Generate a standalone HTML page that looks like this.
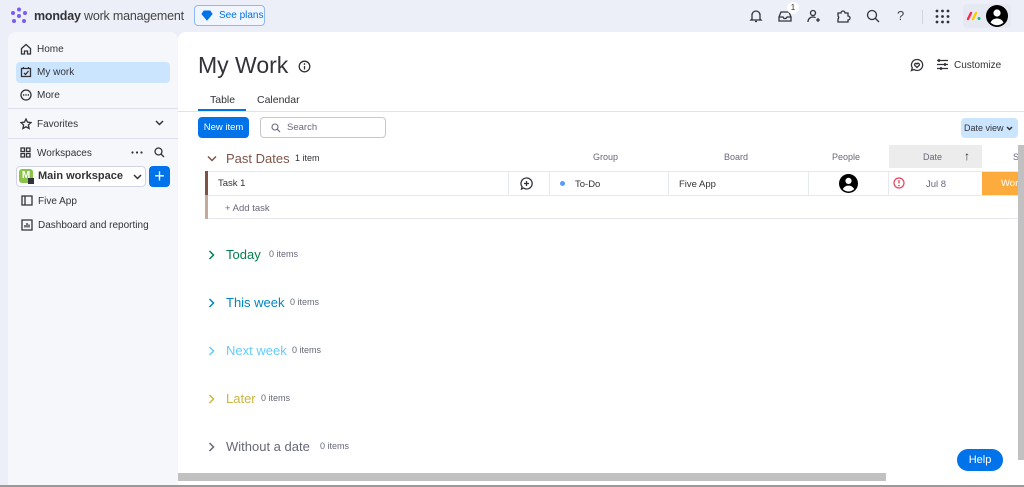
<!DOCTYPE html>
<html><head><meta charset="utf-8"><style>
*{margin:0;padding:0;box-sizing:border-box}
body{width:1024px;height:487px;overflow:hidden;background:#eceff8;font-family:"Liberation Sans",sans-serif;color:#323338;position:relative}
.a{position:absolute;white-space:nowrap}
.side{left:8px;top:32px;width:170px;height:453px;background:#f6f7fb;border-radius:8px 8px 0 0}
.main{left:178px;top:32px;width:846px;height:453px;background:#fff;border-radius:8px 0 0 0}
.si{font-size:10px;color:#323338}
.ico{stroke:#323338;fill:none;stroke-width:1.3}
.hd{font-size:9px;color:#676879}
.grp{font-size:13px}
.cnt{font-size:9px;color:#676879}
.ch{fill:none;stroke-width:1.5}
</style></head><body>
<!-- top bar -->
<svg class="a" style="left:10px;top:7px" width="18" height="18" viewBox="0 0 18 18"><g fill="#7a5cf5"><circle cx="9" cy="2.5" r="2"/><circle cx="3" cy="6" r="2"/><circle cx="15" cy="6" r="2"/><circle cx="9" cy="9" r="2"/><circle cx="4" cy="14" r="2"/><circle cx="14" cy="14" r="2"/></g></svg>
<div class="a" style="left:34px;top:9px;font-size:12.5px;color:#323338;letter-spacing:-0.2px"><b>monday</b> <span style="color:#444">work management</span></div>
<div class="a" style="left:194px;top:5px;width:71px;height:21px;border:1px solid #8fb8f0;border-radius:4px;font-size:10px;color:#0073ea;padding:4px 0 0 24px;background:#f0f5ff">See plans</div>
<svg class="a" style="left:201px;top:10px" width="12" height="11" viewBox="0 0 12 11"><path d="M1 4 3 1h6l2 3-5 6z M1 4h10" fill="#0073ea" stroke="#0073ea"/></svg>
<svg class="a" style="left:748px;top:8px" width="16" height="16" viewBox="0 0 16 16"><path class="ico" d="M4 11V7a4 4 0 018 0v4l1 1H3z M7 13.5h2"/></svg>
<svg class="a" style="left:777px;top:8px" width="16" height="16" viewBox="0 0 16 16"><path class="ico" d="M2 9l2-5h8l2 5v4H2z M2 9h4l1 1.5h2L10 9h4"/></svg>
<div class="a" style="left:787px;top:2px;width:12px;height:12px;border-radius:6px;background:#fff;font-size:8px;text-align:center;line-height:12px">1</div>
<svg class="a" style="left:806px;top:8px" width="16" height="16" viewBox="0 0 16 16"><path class="ico" d="M7 7.5a2.5 2.5 0 100-5 2.5 2.5 0 000 5z M2 14c0-3 2-5 5-5 1 0 2 .3 2.5.8 M12 10v4 M10 12h4"/></svg>
<svg class="a" style="left:835px;top:8px" width="16" height="16" viewBox="0 0 16 16"><path class="ico" d="M3 5h3a2 2 0 014 0h3v3a2 2 0 010 4v2H3v-3a2 2 0 000-3z"/></svg>
<svg class="a" style="left:865px;top:8px" width="16" height="16" viewBox="0 0 16 16"><path class="ico" d="M7 11.5a4.5 4.5 0 100-9 4.5 4.5 0 000 9z M10.5 10.5l3.5 3.5"/></svg>
<div class="a" style="left:897px;top:8px;font-size:13px;color:#444">?</div>
<div class="a" style="left:922px;top:10px;width:1px;height:14px;background:#d0d4e4"></div>
<svg class="a" style="left:935px;top:9px" width="15" height="15" viewBox="0 0 15 15"><g fill="#323338"><circle cx="2" cy="2" r="1.4"/><circle cx="7.5" cy="2" r="1.4"/><circle cx="13" cy="2" r="1.4"/><circle cx="2" cy="7.5" r="1.4"/><circle cx="7.5" cy="7.5" r="1.4"/><circle cx="13" cy="7.5" r="1.4"/><circle cx="2" cy="13" r="1.4"/><circle cx="7.5" cy="13" r="1.4"/><circle cx="13" cy="13" r="1.4"/></g></svg>
<div class="a" style="left:963px;top:4px;width:48px;height:24px;background:#e6e9f2;border-radius:4px"></div>
<svg class="a" style="left:966px;top:11px" width="16" height="10" viewBox="0 0 16 10"><path d="M2 8l3-6" stroke="#f62b54" stroke-width="2.4" stroke-linecap="round"/><path d="M7 8l3-6" stroke="#ffcb00" stroke-width="2.4" stroke-linecap="round"/><circle cx="13" cy="7.5" r="1.5" fill="#00ca72"/></svg>
<svg class="a" style="left:986px;top:5px" width="22" height="22" viewBox="0 0 22 22"><circle cx="11" cy="11" r="11" fill="#000"/><circle cx="11" cy="8" r="3.6" fill="#fff"/><path d="M4.5 17.5c1.5-3 4-4 6.5-4s5 1 6.5 4a9 9 0 01-13 0z" fill="#fff"/></svg>

<!-- sidebar -->
<div class="a side"></div>
<svg class="a" style="left:20px;top:43px" width="12" height="12" viewBox="0 0 12 12"><path class="ico" d="M1.5 5.5 6 1.5l4.5 4V11h-3V8h-3v3h-3z"/></svg>
<div class="a si" style="left:37px;top:44px">Home</div>
<div class="a" style="left:16px;top:62px;width:154px;height:21px;background:#cce5ff;border-radius:4px"></div>
<svg class="a" style="left:20px;top:66px" width="12" height="12" viewBox="0 0 12 12"><path class="ico" d="M1.5 2.5h9v8h-9z M3.5 1v2 M8.5 1v2 M4 7l1.5 1.5L8.5 5"/></svg>
<div class="a si" style="left:37px;top:67px">My work</div>
<svg class="a" style="left:20px;top:89px" width="12" height="12" viewBox="0 0 12 12"><circle cx="6" cy="6" r="5" class="ico"/><circle cx="3.7" cy="6" r=".7"/><circle cx="6" cy="6" r=".7"/><circle cx="8.3" cy="6" r=".7"/></svg>
<div class="a si" style="left:37px;top:90px">More</div>
<div class="a" style="left:8px;top:108px;width:170px;height:1px;background:#dcdfec"></div>
<svg class="a" style="left:20px;top:118px" width="12" height="12" viewBox="0 0 12 12"><path class="ico" d="M6 1l1.5 3.2 3.5.4-2.6 2.4.7 3.5L6 8.8l-3.1 1.7.7-3.5L1 4.6l3.5-.4z"/></svg>
<div class="a si" style="left:37px;top:119px">Favorites</div>
<svg class="a" style="left:155px;top:120px" width="9" height="6" viewBox="0 0 9 6"><path class="ch" stroke="#323338" d="M1 1l3.5 3.5L8 1"/></svg>
<div class="a" style="left:8px;top:138px;width:170px;height:1px;background:#dcdfec"></div>
<svg class="a" style="left:20px;top:147px" width="11" height="11" viewBox="0 0 11 11"><path class="ico" d="M1 1h3.5v3.5H1z M6.5 1H10v3.5H6.5z M1 6.5h3.5V10H1z M6.5 6.5H10V10H6.5z"/></svg>
<div class="a si" style="left:37px;top:148px">Workspaces</div>
<svg class="a" style="left:131px;top:151px" width="12" height="3" viewBox="0 0 12 3"><g fill="#323338"><circle cx="1.5" cy="1.5" r="1.1"/><circle cx="6" cy="1.5" r="1.1"/><circle cx="10.5" cy="1.5" r="1.1"/></g></svg>
<svg class="a" style="left:154px;top:147px" width="11" height="11" viewBox="0 0 11 11"><path class="ico" d="M4.5 8a3.5 3.5 0 100-7 3.5 3.5 0 000 7zM7 7l3 3"/></svg>
<div class="a" style="left:16px;top:166px;width:130px;height:21px;border:1px solid #d0d4e4;border-radius:4px;background:#fff"></div>
<div class="a" style="left:19px;top:169px;width:14px;height:14px;background:#8bc34a;border-radius:3px;color:#fff;font-size:10px;font-weight:bold;text-align:center;line-height:14px">M</div>
<div class="a" style="left:28px;top:178px;width:6px;height:6px;background:#323338"></div>
<div class="a" style="left:38px;top:170px;font-size:11px;font-weight:bold">Main workspace</div>
<svg class="a" style="left:133px;top:174px" width="9" height="6" viewBox="0 0 9 6"><path class="ch" stroke="#323338" d="M1 1l3.5 3.5L8 1"/></svg>
<div class="a" style="left:149px;top:166px;width:21px;height:21px;background:#0073ea;border-radius:4px;color:#fff;font-size:18px;text-align:center;line-height:20px">+</div>
<svg class="a" style="left:21px;top:195px" width="12" height="11" viewBox="0 0 12 11"><path class="ico" d="M1 1h10v9H1z M4 1v9"/></svg>
<div class="a si" style="left:38px;top:196px">Five App</div>
<svg class="a" style="left:21px;top:219px" width="12" height="12" viewBox="0 0 12 12"><path class="ico" d="M1 1h10v10H1z M4 8.5V6 M6 8.5V4 M8 8.5V5.5"/></svg>
<div class="a si" style="left:38px;top:220px">Dashboard and reporting</div>

<!-- main -->
<div class="a main"></div>
<div class="a" style="left:198px;top:52px;font-size:23px;color:#323338">My Work</div>
<svg class="a" style="left:298px;top:60px" width="13" height="13" viewBox="0 0 13 13"><circle cx="6.5" cy="6.5" r="5.3" class="ico"/><path d="M6.5 6v3.5" stroke="#323338" stroke-width="1.3"/><circle cx="6.5" cy="4" r=".8"/></svg>
<svg class="a" style="left:910px;top:58px" width="14" height="14" viewBox="0 0 14 14"><path class="ico" d="M7 1.5a5.5 5.5 0 11-3 10L1.5 12.5l.8-2.6A5.5 5.5 0 017 1.5z M7 9.5 4.8 7.3a1.2 1.2 0 012.2-1.4 1.2 1.2 0 012.2 1.4z"/></svg>
<svg class="a" style="left:936px;top:58px" width="13" height="13" viewBox="0 0 13 13"><path class="ico" d="M1 2.5h11 M1 6.5h11 M1 10.5h11"/><path d="M3 1v3 M9 5v3 M5 9v3" stroke="#323338" stroke-width="1.6"/></svg>
<div class="a" style="left:954px;top:60px;font-size:10px;color:#323338">Customize</div>
<div class="a" style="left:210px;top:94px;font-size:10.5px">Table</div>
<div class="a" style="left:257px;top:94px;font-size:10.5px">Calendar</div>
<div class="a" style="left:198px;top:109px;width:48px;height:2px;background:#0073ea"></div>
<div class="a" style="left:178px;top:111px;width:846px;height:1px;background:#e0e3ee"></div>
<div class="a" style="left:198px;top:117px;width:51px;height:21px;background:#0073ea;border-radius:4px;color:#fff;font-size:9.5px;text-align:center;line-height:21px">New item</div>
<div class="a" style="left:260px;top:117px;width:126px;height:21px;border:1px solid #c5c7d0;border-radius:4px"></div>
<svg class="a" style="left:271px;top:123px" width="10" height="10" viewBox="0 0 10 10"><path d="M4 7a3 3 0 100-6 3 3 0 000 6zM6.2 6.2 9 9" stroke="#676879" fill="none" stroke-width="1.1"/></svg>
<div class="a" style="left:287px;top:122px;font-size:9.5px;color:#676879">Search</div>
<div class="a" style="left:961px;top:118px;width:57px;height:20px;background:#cce5ff;border-radius:4px;font-size:9px;line-height:20px;padding-left:3px">Date view</div>
<svg class="a" style="left:1006px;top:126px" width="7" height="5" viewBox="0 0 7 5"><path class="ch" stroke="#323338" d="M1 1l2.5 2.5L6 1"/></svg>

<!-- table header -->
<svg class="a" style="left:207px;top:155px" width="10" height="7" viewBox="0 0 10 7"><path class="ch" stroke="#7e5347" d="M1 1.5l4 4 4-4"/></svg>
<div class="a grp" style="left:226px;top:151px;color:#7e5347">Past Dates</div>
<div class="a cnt" style="left:295px;top:153px;color:#323338">1 item</div>
<div class="a hd" style="left:593px;top:152px">Group</div>
<div class="a hd" style="left:724px;top:152px">Board</div>
<div class="a hd" style="left:832px;top:152px">People</div>
<div class="a" style="left:889px;top:145px;width:93px;height:23px;background:#ececec"></div>
<div class="a hd" style="left:923px;top:152px">Date</div>
<div class="a" style="left:964px;top:149px;font-size:12px">↑</div>
<div class="a hd" style="left:1013px;top:152px">S</div>
<!-- rows -->
<div class="a" style="left:205px;top:171px;width:819px;height:48px;border:1px solid #e6e9ef;border-right:none"></div>
<div class="a" style="left:205px;top:171px;width:3px;height:24px;background:#7e5347"></div>
<div class="a" style="left:205px;top:195px;width:3px;height:24px;background:#c4a99f"></div>
<div class="a" style="left:208px;top:195px;width:816px;height:1px;background:#e6e9ef"></div>
<div class="a" style="left:508px;top:171px;width:1px;height:24px;background:#e6e9ef"></div>
<div class="a" style="left:549px;top:171px;width:1px;height:24px;background:#e6e9ef"></div>
<div class="a" style="left:668px;top:171px;width:1px;height:24px;background:#e6e9ef"></div>
<div class="a" style="left:808px;top:171px;width:1px;height:24px;background:#e6e9ef"></div>
<div class="a" style="left:888px;top:171px;width:1px;height:24px;background:#e6e9ef"></div>
<div class="a" style="left:218px;top:178px;font-size:9.5px">Task 1</div>
<svg class="a" style="left:520px;top:177px" width="13" height="13" viewBox="0 0 13 13"><path class="ico" d="M6.5 1a5.5 5.5 0 11-3 10l-2 1 .6-2.2A5.5 5.5 0 016.5 1z M6.5 4v5 M4 6.5h5"/></svg>
<div class="a" style="left:560px;top:181px;width:5px;height:5px;border-radius:3px;background:#579bfc"></div>
<div class="a" style="left:575px;top:179px;font-size:9.5px">To-Do</div>
<div class="a" style="left:679px;top:179px;font-size:9.5px">Five App</div>
<svg class="a" style="left:839px;top:174px" width="19" height="19" viewBox="0 0 22 22"><circle cx="11" cy="11" r="11" fill="#000"/><circle cx="11" cy="8" r="3.6" fill="#fff"/><path d="M4.5 17.5c1.5-3 4-4 6.5-4s5 1 6.5 4a9 9 0 01-13 0z" fill="#fff"/></svg>
<svg class="a" style="left:893px;top:177px" width="12" height="12" viewBox="0 0 12 12"><circle cx="6" cy="6" r="5" fill="none" stroke="#e2445c" stroke-width="1.2"/><path d="M6 3v3.5" stroke="#e2445c" stroke-width="1.3"/><circle cx="6" cy="8.6" r=".8" fill="#e2445c"/></svg>
<div class="a" style="left:926px;top:179px;font-size:9.5px;color:#676879">Jul 8</div>
<div class="a" style="left:982px;top:172px;width:42px;height:23px;background:#fdab3d;color:#fff;font-size:9.5px;line-height:23px;padding-left:19px;overflow:hidden;white-space:nowrap">Wor</div>
<div class="a" style="left:225px;top:203px;font-size:9.5px;color:#676879">+ Add task</div>

<!-- groups -->
<svg class="a" style="left:208px;top:250px" width="7" height="10" viewBox="0 0 7 10"><path class="ch" stroke="#037f4c" d="M1.5 1l4 4-4 4"/></svg>
<div class="a grp" style="left:226px;top:247px;color:#037f4c">Today</div>
<div class="a cnt" style="left:269px;top:249px">0 items</div>
<svg class="a" style="left:208px;top:298px" width="7" height="10" viewBox="0 0 7 10"><path class="ch" stroke="#0086c0" d="M1.5 1l4 4-4 4"/></svg>
<div class="a grp" style="left:226px;top:295px;color:#0086c0">This week</div>
<div class="a cnt" style="left:290px;top:297px">0 items</div>
<svg class="a" style="left:208px;top:346px" width="7" height="10" viewBox="0 0 7 10"><path class="ch" stroke="#66ccff" d="M1.5 1l4 4-4 4"/></svg>
<div class="a grp" style="left:226px;top:343px;color:#66ccff">Next week</div>
<div class="a cnt" style="left:292px;top:345px">0 items</div>
<svg class="a" style="left:208px;top:394px" width="7" height="10" viewBox="0 0 7 10"><path class="ch" stroke="#cab641" d="M1.5 1l4 4-4 4"/></svg>
<div class="a grp" style="left:226px;top:391px;color:#cab641">Later</div>
<div class="a cnt" style="left:261px;top:393px">0 items</div>
<svg class="a" style="left:208px;top:442px" width="7" height="10" viewBox="0 0 7 10"><path class="ch" stroke="#676879" d="M1.5 1l4 4-4 4"/></svg>
<div class="a grp" style="left:226px;top:439px;color:#676879">Without a date</div>
<div class="a cnt" style="left:320px;top:441px">0 items</div>

<!-- scrollbars -->
<div class="a" style="left:178px;top:473px;width:708px;height:8px;background:#c1c1c1"></div>
<div class="a" style="left:1018px;top:145px;width:6px;height:315px;background:#c1c1c1"></div>
<div class="a" style="left:0;top:485px;width:1024px;height:2px;background:#9a9a9a"></div>
<div class="a" style="left:957px;top:449px;width:46px;height:22px;background:#0073ea;border-radius:11px;color:#fff;font-size:11px;text-align:center;line-height:22px">Help</div>
</body></html>
